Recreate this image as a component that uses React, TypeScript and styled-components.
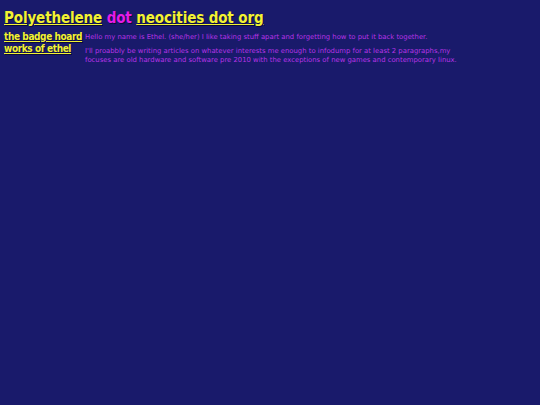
import styled, { createGlobalStyle } from 'styled-components'

const GlobalStyle = createGlobalStyle`
  html, body {
    margin: 0;
    background-color: #191a6b;
  }
  body {
    padding: 4px;
    font-family: "DejaVu Sans", Verdana, sans-serif;
  }
`

const Title = styled.h1`
  margin: 4px 0 5px;
  font-family: "DejaVu Sans Condensed", "DejaVu Sans", sans-serif;
  font-size: 15px;
  font-weight: bold;
  letter-spacing: -0.12px;
  line-height: 20px;
  color: #f2f233;
  text-shadow: 1px 1px 0 #0b0b3a;
`

const YellowLink = styled.a`
  color: #f2f233;
  text-decoration: underline;
`

const Dot = styled.span`
  color: #e61ce6;
`

const Layout = styled.div`
  display: flex;
  align-items: flex-start;
  gap: 3px;
`

const Nav = styled.nav`
  display: flex;
  flex-direction: column;
  width: 78px;
  flex-shrink: 0;
  margin-top: -2px;
`

const NavLink = styled.a`
  font-family: "DejaVu Sans Condensed", "DejaVu Sans", sans-serif;
  font-size: 10px;
  font-weight: bold;
  letter-spacing: -0.4px;
  line-height: 12px;
  color: #f2f233;
  text-decoration: underline;
  text-shadow: 1px 1px 0 #0b0b3a;
  white-space: nowrap;
`

const Content = styled.main`
  width: 374px;
  color: #b833e6;
  font-size: 6.85px;
  line-height: 9px;
`

const Para = styled.p`
  margin: 0 0 5px;
`

export default function App() {
  return (
    <>
      <GlobalStyle />
      <Title>
        <YellowLink href="#">Polyethelene</YellowLink> <Dot>dot</Dot>{' '}
        <YellowLink href="#">neocities dot org</YellowLink>
      </Title>
      <Layout>
        <Nav>
          <NavLink href="#">the badge hoard</NavLink>
          <NavLink href="#">works of ethel</NavLink>
        </Nav>
        <Content>
          <Para>
            Hello my name is Ethel. (she/her) I like taking stuff apart and forgetting how to put it
            back together.
          </Para>
          <Para>
            I'll proabbly be writing articles on whatever interests me enough to infodump for at
            least 2 paragraphs,my focuses are old hardware and software pre 2010 with the exceptions
            of new games and contemporary linux.
          </Para>
        </Content>
      </Layout>
    </>
  )
}
